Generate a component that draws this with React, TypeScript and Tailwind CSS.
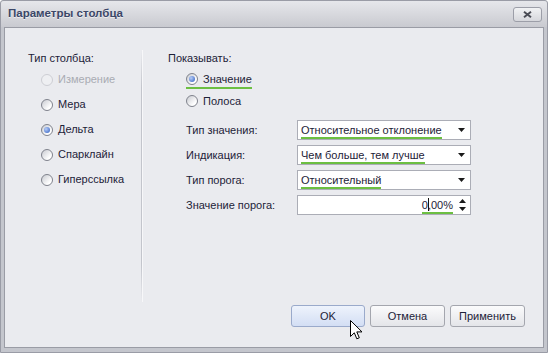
import React from "react";

function Radio({ checked, disabled }: { checked?: boolean; disabled?: boolean }) {
  return (
    <span
      className={`relative inline-block w-[12px] h-[12px] rounded-full border shrink-0 ${
        disabled
          ? "border-[#cdced4] bg-[#eeeff2]"
          : "border-[#7f828c] bg-[linear-gradient(135deg,#c9cbd1,#ffffff_75%)]"
      }`}
    >
      {checked && (
        <span className="absolute left-[2px] top-[2px] w-[6px] h-[6px] rounded-full bg-[radial-gradient(circle_at_35%_35%,#b7cdf7,#2d5cc0)]" />
      )}
    </span>
  );
}

function Arrow() {
  return (
    <svg width="7" height="4" viewBox="0 0 7 4" className="shrink-0">
      <path d="M0 0h7L3.5 4z" fill="#1a1a1a" />
    </svg>
  );
}

function Underlined({ children, className = "" }: { children: React.ReactNode; className?: string }) {
  return (
    <span className={`relative h-full flex items-center ${className}`}>
      {children}
      <span className="absolute left-0 right-0 bottom-0 h-[2px] bg-[#6cbf42]" />
    </span>
  );
}

function Combo({ text }: { text: string }) {
  return (
    <div className="w-[174px] h-[20px] border border-[#abadb6] bg-white flex items-center pl-[3px] pr-[5px]">
      <div className="flex-1 h-full flex items-center">
        <Underlined>{text}</Underlined>
      </div>
      <Arrow />
    </div>
  );
}

export default function App() {
  const labelCls = "w-[111px] shrink-0";
  return (
    <div className="w-[548px] h-[353px] font-['Liberation_Sans',Arial,sans-serif] text-[11px] text-[#1d2238] bg-[#c4c6cd] border border-[#9a9ca6] rounded-t-[3px] flex flex-col">
      {/* title bar */}
      <div className="h-[26px] shrink-0 flex items-center justify-between pl-[7px] pr-[5px] bg-[linear-gradient(#e6e7eb,#c9cad0)] rounded-t-[3px]">
        <span className="font-bold text-[11.5px] text-[#3b4768] [text-shadow:0_1px_0_rgba(255,255,255,0.6)]">
          Параметры столбца
        </span>
        <div className="w-[29px] h-[15px] mt-[1px] rounded-[3px] border border-[#9c9ea8] bg-[linear-gradient(#f1f2f4,#d6d7dc)] flex items-center justify-center">
          <svg width="9" height="7" viewBox="0 0 9 7">
            <path d="M1 0.8L8 6.2M8 0.8L1 6.2" stroke="#4a4c55" strokeWidth="2" />
          </svg>
        </div>
      </div>

      {/* content */}
      <div className="flex-1 mx-[3px] mb-[4px] border border-[#9a9ca5] bg-[#eaebef] flex flex-col">
        <div className="flex flex-1">
          {/* left column */}
          <div className="w-[136px] shrink-0 pt-[22px] pl-[23px]">
            <div className="h-[16px] leading-[16px]">Тип столбца:</div>
            <div className="mt-[1px] pl-[13px] flex flex-col">
              {[
                { t: "Измерение", d: true },
                { t: "Мера" },
                { t: "Дельта", c: true },
                { t: "Спарклайн" },
                { t: "Гиперссылка" },
              ].map((r) => (
                <div key={r.t} className="h-[25px] flex items-center gap-[5px]">
                  <Radio checked={r.c} disabled={r.d} />
                  <span className={r.d ? "text-[#a9abb3]" : ""}>{r.t}</span>
                </div>
              ))}
            </div>
          </div>

          {/* divider */}
          <div className="w-px mt-[22px] h-[252px] bg-[linear-gradient(rgba(190,192,200,0),#c3c5cc_15%,#c3c5cc_85%,rgba(190,192,200,0))] shadow-[1px_0_0_#f7f7f9]" />

          {/* right column */}
          <div className="flex-1 pt-[22px] pl-[26px]">
            <div className="h-[16px] leading-[16px]">Показывать:</div>
            <div className="mt-[2px] pl-[18px] flex flex-col">
              <div className="h-[22px] flex items-center">
                <span className="relative h-full flex items-center gap-[5px]">
                  <Radio checked />
                  <span>Значение</span>
                  <span className="absolute left-0 right-0 bottom-[1px] h-[2px] bg-[#6cbf42]" />
                </span>
              </div>
              <div className="h-[22px] flex items-center gap-[5px]">
                <Radio />
                <span>Полоса</span>
              </div>
            </div>

            <div className="mt-[8px] pl-[18px] flex flex-col gap-[5px]">
              <div className="flex items-center">
                <span className={labelCls}>Тип значения:</span>
                <Combo text="Относительное отклонение" />
              </div>
              <div className="flex items-center">
                <span className={labelCls}>Индикация:</span>
                <Combo text="Чем больше, тем лучше" />
              </div>
              <div className="flex items-center">
                <span className={labelCls}>Тип порога:</span>
                <Combo text="Относительный" />
              </div>
              <div className="flex items-center">
                <span className={labelCls}>Значение порога:</span>
                <div className="w-[174px] h-[20px] border border-[#abadb6] bg-white flex items-center pr-[4px]">
                  <div className="flex-1 h-full flex items-center justify-end pr-[6px]">
                    <Underlined>
                      <span>0</span>
                      <span className="relative">
                        ,
                        <span className="absolute left-[0px] top-[1px] w-px h-[13px] bg-[#111]" />
                      </span>
                      <span>00%</span>
                    </Underlined>
                  </div>
                  <div className="flex flex-col items-center gap-[4px]">
                    <svg width="7" height="4" viewBox="0 0 7 4">
                      <path d="M0 4h7L3.5 0z" fill="#1a1a1a" />
                    </svg>
                    <svg width="7" height="4" viewBox="0 0 7 4">
                      <path d="M0 0h7L3.5 4z" fill="#1a1a1a" />
                    </svg>
                  </div>
                </div>
              </div>
            </div>
          </div>
        </div>

        {/* buttons */}
        <div className="relative flex justify-end gap-[5px] pr-[18px] pb-[20px]">
          <button className="w-[74px] h-[22px] rounded-[3px] border border-[#9aaacb] bg-[linear-gradient(#eef3fc,#d3def4)] text-[#1d2238]">
            OK
          </button>
          <button className="w-[75px] h-[22px] rounded-[3px] border border-[#a4a6ae] bg-[linear-gradient(#fbfbfc,#e4e5e9)] text-[#1d2238]">
            Отмена
          </button>
          <button className="w-[75px] h-[22px] rounded-[3px] border border-[#a4a6ae] bg-[linear-gradient(#fbfbfc,#e4e5e9)] text-[#1d2238]">
            Применить
          </button>
          {/* mouse cursor */}
          <svg
            className="absolute left-[345px] top-[15px]"
            width="13"
            height="20"
            viewBox="0 0 13 20"
          >
            <path
              d="M0.5 0.5V16.5L4.3 12.8L6.8 18.8L9.3 17.8L6.8 11.9H12L0.5 0.5Z"
              fill="#fff"
              stroke="#000"
              strokeWidth="1"
              strokeLinejoin="round"
            />
          </svg>
        </div>
      </div>
    </div>
  );
}
